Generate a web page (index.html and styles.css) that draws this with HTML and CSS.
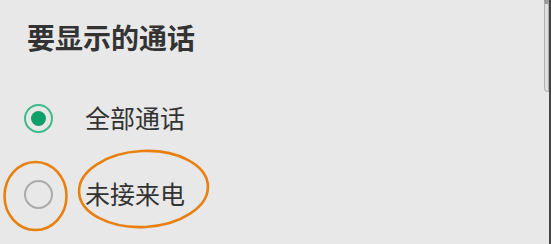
FILE: index.html
```html
<!DOCTYPE html>
<html lang="zh-CN">
<head>
    <meta charset="UTF-8">
    <meta name="viewport" content="width=device-width, initial-scale=1.0">
    <title>要显示的通话</title>
    <link rel="stylesheet" href="styles.css">
</head>
<body>
    <div class="dialog">
        <h1 class="title">要显示的通话</h1>
        <ul class="options">
            <li class="option">
                <span class="radio checked"></span>
                <span class="label">全部通话</span>
            </li>
            <li class="option">
                <span class="radio"></span>
                <span class="label">未接来电</span>
            </li>
        </ul>

        <!-- 标注圈 -->
        <svg class="marks" width="551" height="244" viewBox="0 0 551 244">
            <ellipse cx="35.5" cy="196" rx="31" ry="34" />
            <ellipse cx="143.5" cy="189" rx="64.5" ry="38" transform="rotate(-3 143.5 189)" />
        </svg>

        <div class="scrollbar"><div class="thumb"></div></div>
    </div>
</body>
</html>
```

FILE: styles.css
```css
body {
    margin: 0;
    padding: 0;
    background-color: #e8e8e8;
    font-family: "Noto Sans CJK SC", "Noto Sans", sans-serif;
    color: #333;
}
.dialog {
    position: relative;
    width: 551px;
    height: 244px;
    overflow: hidden;
}
.title {
    margin: 0;
    padding: 19px 0 0 27px;
    font-size: 28px;
    line-height: 36px;
    font-weight: bold;
    color: #333;
}
.options {
    list-style: none;
    margin: 0;
    padding: 25px 0 0 24px;
}
.option {
    display: flex;
    align-items: center;
    gap: 32px;
    height: 76px;
}
.radio {
    box-sizing: border-box;
    width: 29px;
    height: 29px;
    border-radius: 50%;
    border: 2px solid #aaa;
    display: flex;
    align-items: center;
    justify-content: center;
}
.radio.checked {
    border-color: #3dbb8c;
}
.radio.checked::after {
    content: "";
    width: 15px;
    height: 15px;
    border-radius: 50%;
    background-color: #0f9f6b;
}
.label {
    font-size: 25px;
    line-height: 32px;
    margin-top: -2px;
    color: #333;
}
.marks {
    position: absolute;
    top: 0;
    left: 0;
    pointer-events: none;
}
.marks ellipse {
    fill: none;
    stroke: #e8800f;
    stroke-width: 2.6;
}
.scrollbar {
    position: absolute;
    top: 0;
    right: 0;
    width: 7px;
    height: 244px;
    border-right: 2px solid #444;
    box-sizing: border-box;
}
.thumb {
    box-sizing: border-box;
    width: 5px;
    height: 92px;
    border: 1px solid #b0b0b0;
    border-top: 4px solid #999;
    border-radius: 0 0 0 4px;
    background-color: #e0e0e0;
}
```
